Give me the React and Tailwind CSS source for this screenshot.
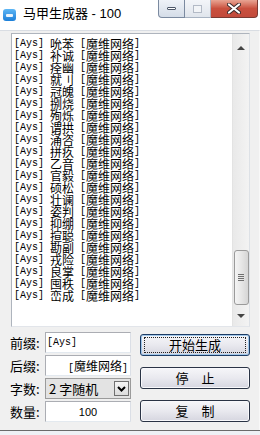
import React from 'react';

const names = ['吮苯','补诚','痊幽','就刂','冠魄','捌烧','殉烁','谓拱','涌咨','拼疚','乙音','官毅','硕松','壮谰','姿判','抑绷','揎聪','勘副','戎险','良掌','囤秩','峦成'];

const mono = "font-['Liberation_Mono',monospace] text-[10px] leading-[12px] whitespace-pre";
const cjk = "font-['Noto_Sans_CJK_SC',sans-serif] text-[12px] leading-[12px] whitespace-pre";

function Line({ n }) {
  return (
    <div className="h-[12px] leading-[12px] whitespace-nowrap text-black flex items-center">
      <span className={mono}>[Ays] </span>
      <span className={cjk}>{n}</span>
      <span className={mono}> [</span>
      <span className={cjk}>魔维网络</span>
      <span className={mono}>]</span>
    </div>
  );
}

function Btn({ children, primary }) {
  return (
    <div className={`w-[110px] h-[22px] rounded-[3px] border ${primary ? 'border-[#1d3b63]' : 'border-[#2a3345]'} bg-gradient-to-b from-[#f6f6f9] via-[#e9e9ef] to-[#d6d6e0] flex items-center justify-center ${primary ? 'shadow-[inset_0_0_0_1px_#9fc7ea]' : 'shadow-[inset_0_0_0_1px_#f8f8fb]'}`}>
      <div className={`w-[102px] h-[16px] flex items-center justify-center ${primary ? 'border border-dotted border-[#222]' : ''}`}>
        <span className="font-['Noto_Sans_CJK_SC',sans-serif] text-[13px] leading-[14px] text-black whitespace-pre">{children}</span>
      </div>
    </div>
  );
}

function Label({ children }) {
  return (
    <span className="w-[35px] font-['Noto_Sans_CJK_SC',sans-serif] text-[13px] leading-[14px] text-black whitespace-nowrap">{children}</span>
  );
}

export default function App() {
  return (
    <div className="w-[260px] h-[435px] overflow-hidden bg-white flex flex-col">
      {/* title bar */}
      <div className="h-[30px] flex items-start bg-white shrink-0">
        <div className="mt-[9px] ml-[3px] w-[13px] h-[12px] rounded-[3px] bg-gradient-to-b from-[#5cb6f5] to-[#1b7fd8] flex items-center justify-center">
          <div className="w-[7px] h-[3px] bg-white/90 rounded-[1px]" />
        </div>
        <div className="ml-[7px] mt-[6px] text-[13px] leading-[16px] text-black font-['Liberation_Sans','Noto_Sans_CJK_SC',sans-serif] whitespace-nowrap">马甲生成器 - 100</div>
        <div className="ml-auto mr-[2px] flex">
          <div className="w-[27px] h-[18px] rounded-bl-[4px] border border-t-0 border-[#7b8aa0] bg-gradient-to-b from-[#eef2f8] to-[#d5dde8] flex items-center justify-center">
            <div className="w-[9px] h-[3px] bg-white border border-[#4b5668] rounded-[1px]" />
          </div>
          <div className="w-[26px] h-[18px] border-b border-r border-[#a8b3c2] bg-gradient-to-b from-[#f3f5f9] to-[#e0e5ec] flex items-center justify-center">
            <div className="w-[9px] h-[8px] border border-[#b3bac6] bg-[#f2f4f7]" />
          </div>
          <div className="w-[47px] h-[18px] rounded-br-[4px] border border-t-0 border-l-0 border-[#7a3a32] bg-gradient-to-b from-[#e8a493] via-[#c9503e] to-[#c24a3b] flex items-center justify-center">
            <svg width="14" height="11" viewBox="0 0 14 11">
              <path d="M2 1.5 L12 9.5 M12 1.5 L2 9.5" stroke="#3a2a2a" strokeWidth="4" strokeLinecap="round" />
              <path d="M2 1.5 L12 9.5 M12 1.5 L2 9.5" stroke="#ffffff" strokeWidth="2.2" strokeLinecap="round" />
            </svg>
          </div>
        </div>
      </div>

      {/* client */}
      <div className="flex-1 bg-[#f0f0f0] border-t border-[#d9dde3] border-r border-r-[#f8f8f8] flex flex-col">
        {/* list */}
        <div className="mt-[2px] ml-[11px] w-[239px] h-[294px] border border-[#aeb4bd] border-b-[#e2e5ea] border-r-[#dde1e6] bg-white flex">
          <div className="flex-1 pl-[2px] pt-[4px]">
            {names.map((n) => (
              <Line key={n} n={n} />
            ))}
          </div>
          <div className="w-[17px] bg-gradient-to-r from-[#e9e9e9] to-[#f3f3f3] border-l border-[#e3e3e3] flex flex-col items-center">
            <div className="h-[17px] flex items-center justify-center mt-[5px]">
              <div className="w-0 h-0 border-l-[4px] border-r-[4px] border-b-[4px] border-l-transparent border-r-transparent border-b-[#444]" />
            </div>
            <div className="flex-1" />
            <div className="w-[15px] h-[55px] rounded-[3px] border border-[#9a9a9a] bg-gradient-to-r from-[#f4f4f4] via-[#e6e6e6] to-[#d5d5d5] flex flex-col items-center justify-center gap-[1px]">
              <div className="w-[6px] h-[1px] bg-[#6f6f6f]" />
              <div className="w-[6px] h-[1px] bg-[#6f6f6f]" />
              <div className="w-[6px] h-[1px] bg-[#6f6f6f]" />
              <div className="w-[6px] h-[1px] bg-[#6f6f6f]" />
            </div>
            <div className="h-[21px] flex items-center justify-center">
              <div className="w-0 h-0 border-l-[4px] border-r-[4px] border-t-[4px] border-l-transparent border-r-transparent border-t-[#444]" />
            </div>
          </div>
        </div>

        {/* form */}
        <div className="flex mt-[5px] ml-[10px]">
          <div className="flex flex-col gap-[2px]">
            <div className="flex items-center h-[21px]">
              <Label>前缀:</Label>
              <div className="w-[86px] h-[21px] bg-white border border-[#abadb3] border-b-[#e3e9ef] border-r-[#dbdfe6] flex items-center pl-[1px]">
                <span className={mono}>[Ays]</span>
              </div>
            </div>
            <div className="flex items-center h-[21px]">
              <Label>后缀:</Label>
              <div className="w-[86px] h-[21px] bg-white border border-[#abadb3] border-b-[#e3e9ef] border-r-[#dbdfe6] pr-[2px] pt-[3px] text-right whitespace-nowrap leading-[12px]">
                <span className={mono}>[</span><span className={cjk}>魔维网络</span><span className={mono}>]</span>
              </div>
            </div>
            <div className="flex items-center h-[21px]">
              <Label>字数:</Label>
              <div className="w-[86px] h-[21px] bg-[#e3e3e3] border border-[#9b9b9b] flex items-center">
                <span className="ml-[3px] font-['Noto_Sans_CJK_SC',sans-serif] text-[13px] leading-[14px] text-black whitespace-pre">2 字随机</span>
                <div className="ml-auto mr-[1px] w-[15px] h-[15px] border border-[#707070] bg-gradient-to-b from-[#f5f5f5] to-[#dcdcdc] flex items-center justify-center">
                  <svg width="9" height="6" viewBox="0 0 9 6">
                    <path d="M1 1 L4.5 4.5 L8 1" stroke="#000" strokeWidth="2" fill="none" />
                  </svg>
                </div>
              </div>
            </div>
            <div className="flex items-center h-[21px]">
              <Label>数量:</Label>
              <div className="w-[86px] h-[21px] bg-white border border-[#abadb3] border-b-[#e3e9ef] border-r-[#dbdfe6] flex items-center justify-center">
                <span className="font-['Liberation_Sans',sans-serif] text-[11px] leading-[12px] text-black">100</span>
              </div>
            </div>
          </div>
          <div className="flex flex-col ml-[9px] mt-[2px] gap-[11px]">
            <Btn primary>开始生成</Btn>
            <Btn>停　止</Btn>
            <Btn>复　制</Btn>
          </div>
        </div>
        <div className="flex-1" />
      </div>
      <div className="h-[5px] shrink-0 border-t border-[#6a6a6a] bg-[#eef1f5]" />
    </div>
  );
}
